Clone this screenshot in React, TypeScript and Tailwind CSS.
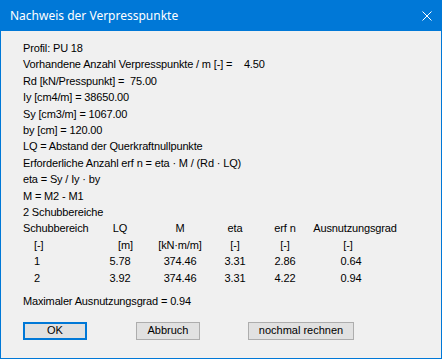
import React from "react";

const lines = [
   "Profil: PU 18",
   "Vorhandene Anzahl Verpresspunkte / m [-] =    4.50",
   "Rd [kN/Presspunkt] =  75.00",
   "Iy [cm4/m] = 38650.00",
   "Sy [cm3/m] = 1067.00",
   "by [cm] = 120.00",
   "LQ = Abstand der Querkraftnullpunkte",
   "Erforderliche Anzahl erf n = eta · M / (Rd · LQ)",
   "eta = Sy / Iy · by",
   "M = M2 - M1",
   "2 Schubbereiche",
];

const rows = [
   ["Schubbereich", "LQ", "M", "eta", "erf n", "Ausnutzungsgrad"],
   ["[-]", "[m]", "[kN·m/m]", "[-]", "[-]", "[-]"],
   ["1", "5.78", "374.46", "3.31", "2.86", "0.64"],
   ["2", "3.92", "374.46", "3.31", "4.22", "0.94"],
];

const colClass = [
   "w-[67px] text-left",
   "w-[60px] text-center",
   "w-[60px] text-center",
   "w-[50px] text-center",
   "w-[50px] text-center",
   "w-[90px] text-center",
];

// small per-cell nudges so the columns sit like the original dialog
const nudge = (i: number, j: number) => {
   if (j === 0 && i > 0) return " pl-[11px]";
   if (j === 1 && i === 1) return " pl-[11px]";
   if (j === 5 && i === 1) return " pr-[14px]";
   if (j === 5 && i > 1) return " pr-[8px]";
   return "";
};

const App: React.FC = () => {
   return (
      <div
         className="w-[442px] h-[359px] border border-[#0078d7] bg-[#f0f0f0] flex flex-col text-black"
         style={{ fontFamily: '"Liberation Sans", Arial, sans-serif' }}
      >
         <div className="h-[30px] bg-[#0078d7] flex items-center justify-between pl-[9px] pr-[9px] shrink-0">
            <span
               className="text-white text-[12px]"
               style={{ fontFamily: '"Noto Sans", "Open Sans", sans-serif' }}
            >
               Nachweis der Verpresspunkte
            </span>
            <svg width="10" height="10" viewBox="0 0 10 10">
               <path d="M0.5 0.5 L9.5 9.5 M9.5 0.5 L0.5 9.5" stroke="white" strokeWidth="1" />
            </svg>
         </div>
         <div className="pl-[22px] pt-[9px] text-[11px] leading-[16.4px] tracking-[-0.15px]">
            {lines.map((l, i) => (
               <div key={i} className="whitespace-pre">
                  {l}
               </div>
            ))}
            {rows.map((r, i) => (
               <div key={"r" + i} className="flex whitespace-pre">
                  {r.map((c, j) => (
                     <div key={j} className={colClass[j] + nudge(i, j)}>
                        {c}
                     </div>
                  ))}
               </div>
            ))}
            <div className="mt-[7px]">Maximaler Ausnutzungsgrad = 0.94</div>
            <div className="flex mt-[12px] tracking-normal">
               <button className="w-[64px] h-[18px] border-2 border-[#0078d7] bg-[#e1e1e1] leading-none">
                  OK
               </button>
               <button className="w-[64px] h-[18px] ml-[49px] border border-[#adadad] bg-[#e1e1e1] leading-none">
                  Abbruch
               </button>
               <button className="w-[106px] h-[18px] ml-[48px] border border-[#adadad] bg-[#e1e1e1] leading-none">
                  nochmal rechnen
               </button>
            </div>
         </div>
      </div>
   );
};

export default App;
